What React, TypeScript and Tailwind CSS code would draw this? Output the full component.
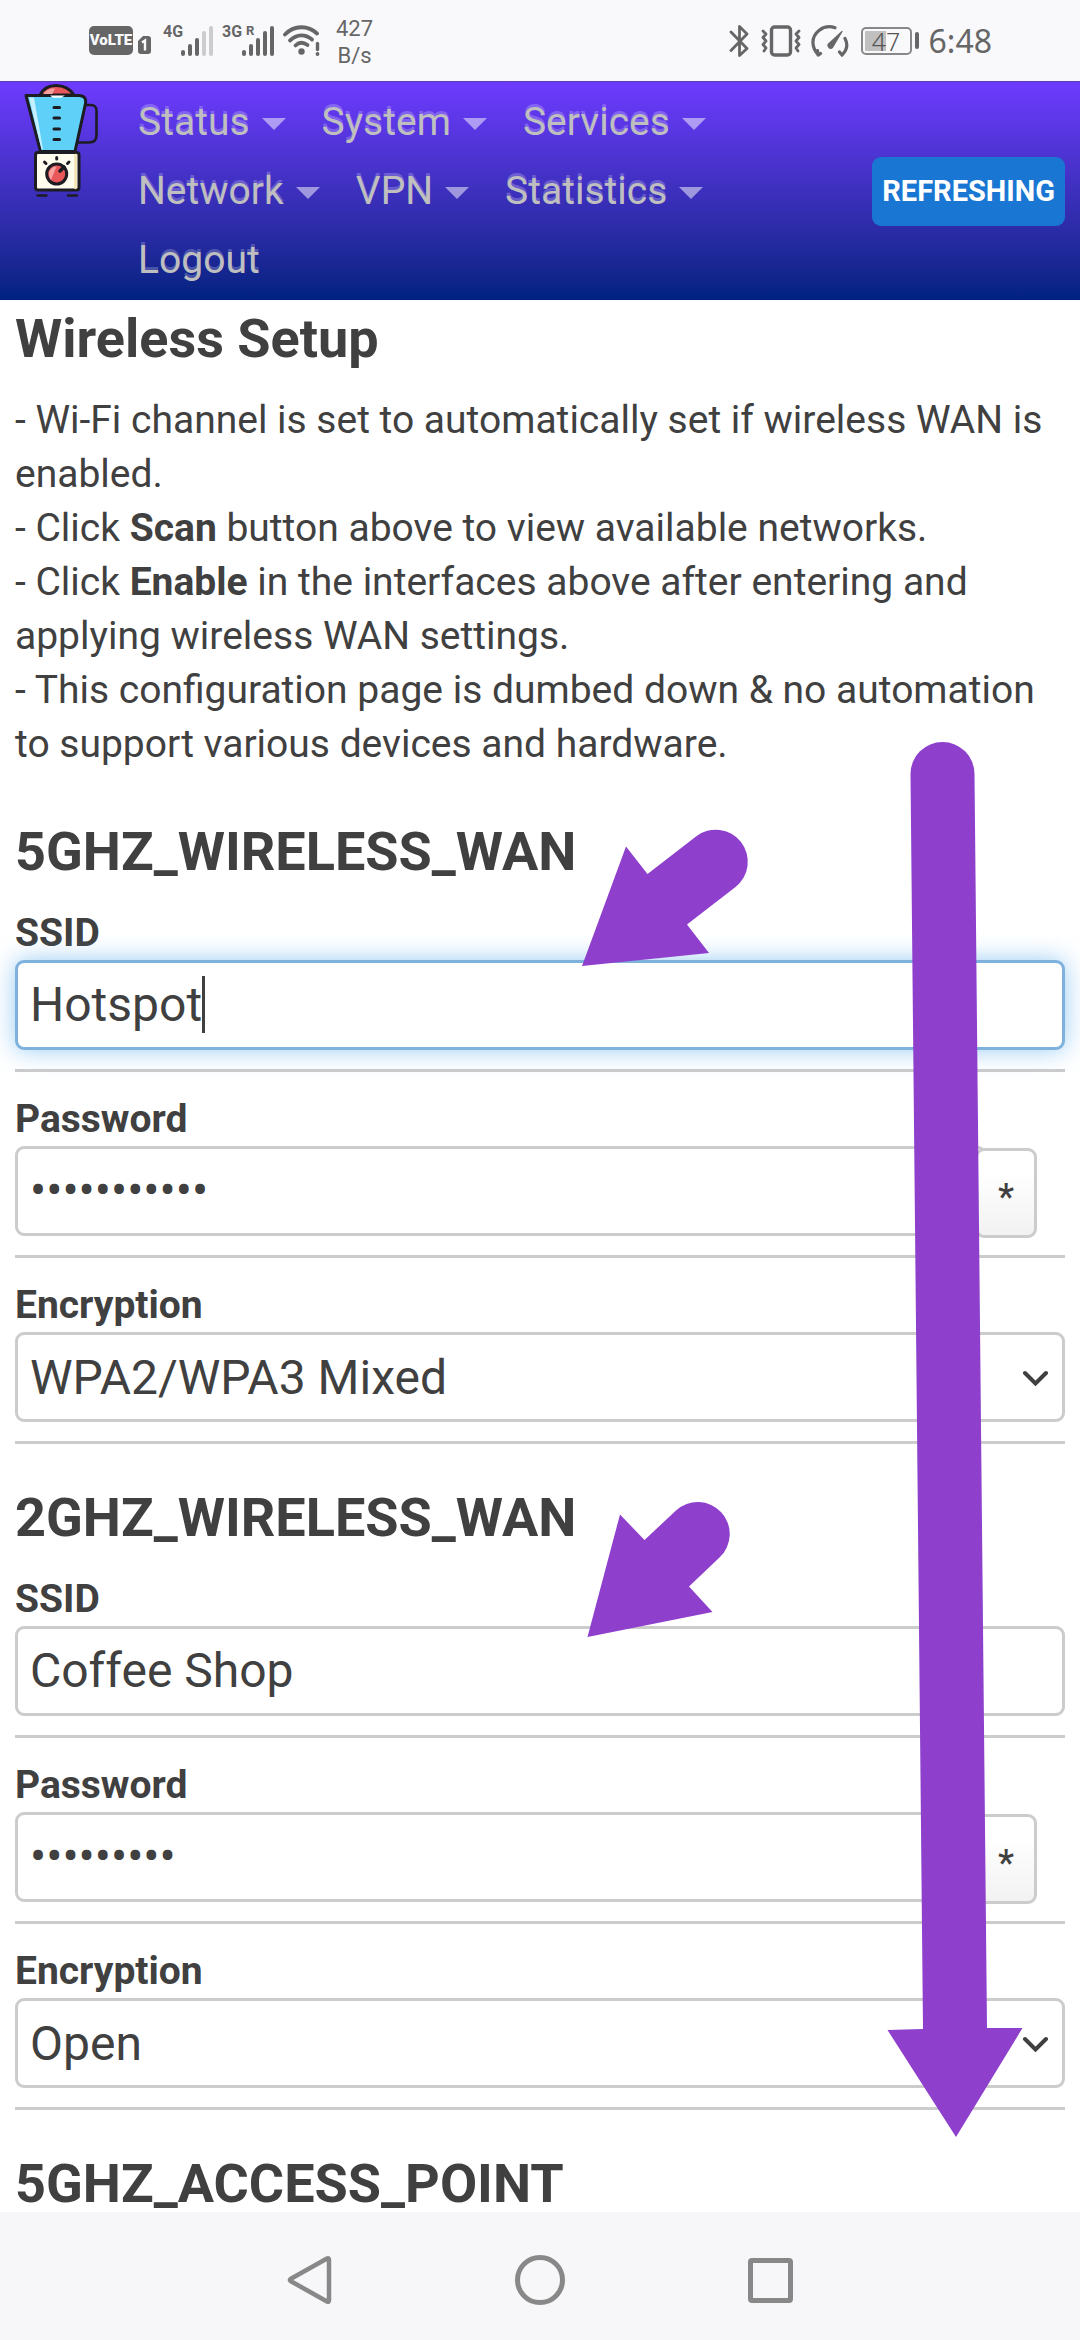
import type { ReactNode } from "react";

const NAV_ITEMS = [
  { label: "Status", menu: true },
  { label: "System", menu: true },
  { label: "Services", menu: true },
  { label: "Network", menu: true },
  { label: "VPN", menu: true },
  { label: "Statistics", menu: true },
  { label: "Logout", menu: false },
];

function SignalBars({ filled }: { filled: number }) {
  const heights = [6, 12, 18, 25, 30];
  return (
    <svg className="h-[30px] w-[34px]" viewBox="0 0 34 30" aria-hidden="true">
      {heights.map((h, i) => (
        <rect key={i} x={i * 7 + 1} y={30 - h} width="4" height={h} rx="2" fill={i < filled ? "#666" : "#ccc"} />
      ))}
    </svg>
  );
}

function StatusBar() {
  return (
    <div className="flex h-[81px] shrink-0 items-center justify-between bg-[#f9f9fc] pr-[88px] pl-[89px] text-[#666]">
      <div className="flex items-center">
        <span className="flex h-[29px] w-[44px] items-center justify-center rounded-[5px] bg-[#666] font-['Roboto',sans-serif] text-[15px] font-black text-[#f9f9fc]">
          VoLTE
        </span>
        <svg className="mt-2 ml-[5px] h-[18px] w-[13px]" viewBox="0 0 13 18" aria-hidden="true">
          <path d="M5 0h5a3 3 0 0 1 3 3v12a3 3 0 0 1-3 3H3a3 3 0 0 1-3-3V5z" fill="#666" />
          <path d="M4 6.500 7 4.500V14.500" fill="none" stroke="#f9f9fc" strokeWidth="2.400" />
        </svg>
        <span className="mb-[18px] ml-3 w-[20px] font-['Roboto',sans-serif] text-[16px] leading-5 font-bold">4G</span>
        <span className="-ml-[3px]">
          <SignalBars filled={3} />
        </span>
        <span className="mb-[18px] ml-2 flex w-[30px] gap-1 font-['Roboto',sans-serif] leading-5 font-bold">
          <span className="text-[16px]">3G</span>
          <span className="text-[13px] leading-[18px]">R</span>
        </span>
        <span className="-ml-[11px]">
          <SignalBars filled={5} />
        </span>
        <svg className="ml-2 h-[31px] w-[37px]" viewBox="0 0 37 31" fill="none" stroke="#666" strokeWidth="3.800" strokeLinecap="round" aria-hidden="true">
          <path d="M2 9.500C11 0 25 0 34 8.500" />
          <path d="M7 15.500C14 9 22 9 29 14.500" />
          <path d="M12.500 20.500C16 17 20.500 17 24.500 20" />
          <circle cx="18.500" cy="26.500" r="3.200" fill="#666" stroke="none" />
          <path d="M34.500 18.500v6" strokeWidth="3.400" />
          <circle cx="34.500" cy="29" r="1.900" fill="#666" stroke="none" />
        </svg>
        <span className="mt-[2px] ml-4 text-center font-['Roboto',sans-serif] text-[22px] leading-[27px]">
          427
          <br />
          B/s
        </span>
      </div>
      <div className="flex items-center">
        <svg className="h-[32px] w-[20px]" viewBox="0 0 20 32" fill="none" stroke="#666" strokeWidth="2.800" strokeLinejoin="round" strokeLinecap="round" aria-hidden="true">
          <path d="M2 7l16 16.500-7.500 7V1.500L18 9 2 25.500" />
        </svg>
        <svg className="ml-3 h-[32px] w-[40px]" viewBox="0 0 40 32" fill="none" stroke="#666" strokeLinejoin="round" strokeLinecap="round" aria-hidden="true">
          <rect x="10.500" y="2" width="19" height="28" rx="3" strokeWidth="3.400" />
          <path d="M2 6l3 3-3 3.500 3 3.500-3 3.500 3 3.500-2 3M38 6l-3 3 3 3.500-3 3.500 3 3.500-3 3.500 2 3" strokeWidth="2.800" />
        </svg>
        <svg className="ml-[10px] h-[32px] w-[38px]" viewBox="0 0 38 32" fill="none" stroke="#666" strokeWidth="3.200" strokeLinecap="round" strokeLinejoin="round" aria-hidden="true">
          <path d="M9.500 28.500 7.500 30C0 22 0 12 8 5.500C13 1.500 19 1 24 2.800M7 30l-.5-4.500" />
          <path d="M34 13.500C37 19 36 25 31 30M31 30l-2.500-3" />
          <path d="M31 6.500 21.500 22.500a2.800 2.800 0 0 1-4.500-3z" fill="#666" strokeWidth="1.200" />
        </svg>
        <span className="ml-3 flex h-[28px] w-[51px] items-center rounded-[5px] border-2 border-[#888] bg-[linear-gradient(90deg,#c0c0c0_0_23px,transparent_23px)] bg-clip-content p-[2px]">
          <span className="w-full text-center font-['Noto_Sans',sans-serif] text-[25px] leading-5 font-light text-[#555]">47</span>
        </span>
        <span className="ml-[3px] h-[17px] w-1 rounded-sm bg-[#666]" />
        <span className="ml-[10px] font-['Noto_Sans',sans-serif] text-[32px] leading-none">6:48</span>
      </div>
    </div>
  );
}

function BlenderLogo() {
  return (
    <svg className="h-[113px] w-[75px]" viewBox="0 0 75 113" stroke="#1c1c22" strokeWidth="3" strokeLinejoin="round" strokeLinecap="round" role="img" aria-label="Blender logo">
      <path d="M16 11C19 5 25 1.500 32 1.500S46 5 50 11z" fill="#e8585a" />
      <path d="M19 10.500C22 5.500 27 4 31 4.500L28 10.500z" fill="#f6a0a0" stroke="none" />
      <path d="M62 21h5c3 0 5.500 2 5.500 5.500V51c0 5-3 7.500-7.500 7.500H54" fill="none" strokeWidth="2.600" />
      <path d="M2 11.500h53c5 0 7.500 3 6.500 8L51 67.500H16.500z" fill="#5fd0f7" />
      <path d="M5 13.500h5l9 52h-1.500z" fill="#c4f0ff" stroke="none" />
      <path d="M26 11.500l3 2.200h8l4-2.200z" fill="#fff" stroke="none" />
      <path d="M30 23.500h5.500M30 34h5.500M30 45h5.500M30 55.500h5.500" />
      <rect x="11.500" y="68.500" width="43.500" height="37.500" rx="2.500" fill="#fffdee" />
      <path d="M51.500 71v33" stroke="#f3e3ae" strokeWidth="2.500" />
      <path d="M32.700 73.500v1.500M20.500 78l1.500 1.500M45 78l-1.500 1.500" />
      <circle cx="32.700" cy="90" r="10" fill="#e8585a" />
      <path d="M27 96C22.500 90 26 82.500 32.500 82.500z" fill="#f6a0a0" stroke="none" />
      <path d="M36 87l4-4" strokeWidth="3.500" />
      <path d="M13.500 111.500h9M44 111.500h9" strokeWidth="2.400" />
    </svg>
  );
}

function Header() {
  return (
    <header className="flex shrink-0 items-center border-t border-[#5b3fb0] bg-linear-to-b from-[#6e3bff] to-[#002280] pt-[6px] pr-[15px] pb-[5px] pl-6 font-['Roboto',sans-serif]">
      <a href="#home" className="-mt-1 self-start">
        <BlenderLogo />
      </a>
      <nav className="ml-[39px] max-w-[680px] flex-1">
        <ul className="flex flex-wrap gap-x-9">
          {NAV_ITEMS.map((item) => (
            <li key={item.label}>
              <a
                href={"#" + item.label.toLowerCase()}
                className="flex items-center gap-3 text-[39px] leading-[69px] text-[#bfbfbf] [text-shadow:0_-3px_0_rgba(255,255,255,0.22)]"
              >
                {item.label}
                {item.menu && (
                  <svg className="mt-[3px] h-3 w-6" viewBox="0 0 24 12" aria-hidden="true">
                    <path d="M0 0h24L12 12z" fill="#fff" fillOpacity="0.500" />
                  </svg>
                )}
              </a>
            </li>
          ))}
        </ul>
      </nav>
      <button type="button" className="ml-auto h-[69px] rounded-[9px] bg-[#1976d2] px-[10px] text-[29px] font-bold text-white">
        REFRESHING
      </button>
    </header>
  );
}

const CONTROL =
  "h-[90px] w-full rounded-[9px] border-3 bg-white px-3 text-[48px] text-[#404040] outline-none";

function Field({ id, label, children }: { id: string; label: string; children: ReactNode }) {
  return (
    <div className="mb-5 border-b-3 border-[#ccc] pb-[19px]">
      <label htmlFor={id} className="block font-bold">
        {label}
      </label>
      {children}
    </div>
  );
}

type SectionProps = {
  id: string;
  title: string;
  ssid: string;
  password: string;
  encryption: string;
  active?: boolean;
};

function NetworkSection({ id, title, ssid, password, encryption, active }: SectionProps) {
  return (
    <section>
      <SectionTitle>{title}</SectionTitle>
      <Field id={id + "-ssid"} label="SSID">
        <div className="relative">
          <input
            id={id + "-ssid"}
            type="text"
            defaultValue={ssid}
            className={
              CONTROL +
              " pb-[2px]" +
              (active ? " border-[#7eb2dc] shadow-[0_0_24px_rgba(82,168,236,0.6)]" : " border-[#ccc]")
            }
          />
          {active && <span className="absolute top-4 left-[187px] h-[57px] w-[3px] bg-[#404040]" />}
        </div>
      </Field>
      <Field id={id + "-password"} label="Password">
        <div className="flex items-start pr-7">
          <input
            id={id + "-password"}
            type="password"
            defaultValue={password}
            className={CONTROL + " min-w-0 flex-1 border-[#ccc] pb-[2px]"}
          />
          <button
            type="button"
            aria-label="Reveal password"
            className="relative mt-[2px] -mb-[2px] -ml-3 h-[90px] w-[62px] shrink-0 rounded-[9px] border-3 border-[#ccc] bg-linear-to-b from-white from-25% to-[#f2f2f2] pt-2 text-[36px] font-medium"
          >
            *
          </button>
        </div>
      </Field>
      <Field id={id + "-encryption"} label="Encryption">
        <div className="relative">
          <select id={id + "-encryption"} defaultValue={encryption} className={CONTROL + " appearance-none border-[#ccc] pt-[2px]"}>
            <option>WPA2/WPA3 Mixed</option>
            <option>Open</option>
          </select>
          <svg className="pointer-events-none absolute top-[38px] right-4 h-4 w-[27px]" viewBox="0 0 27 16" fill="none" stroke="#404040" strokeWidth="4" strokeLinecap="round" aria-hidden="true">
            <path d="M3 3l10.500 10.500L24 3" />
          </svg>
        </div>
      </Field>
    </section>
  );
}

function SectionTitle({ children }: { children: ReactNode }) {
  return <h3 className="text-[54px] leading-[108px] font-bold">{children}</h3>;
}

/* Arrows laid over the form */
function Annotations() {
  return (
    <svg className="pointer-events-none absolute top-0 left-0 h-[1912px] w-[1080px]" viewBox="0 300 1080 1912" fill="#8e3fcc" aria-hidden="true">
      <path d="M582 966 626 846.500 647.500 874 696 836.500A32 32 0 0 1 735.500 887L687 924.500 709 953z" />
      <path d="M587.500 1637 620 1514.500 644.500 1540 676 1510.500A32 32 0 0 1 719.500 1557.500L689 1586.500 712.500 1612z" />
      <path d="M910.500 774A32 32 0 0 1 974.500 774L987 2028 1022.500 2028 956 2137 887.500 2030 923 2029z" />
    </svg>
  );
}

function SystemNav() {
  return (
    <nav className="flex h-[128px] shrink-0 items-center justify-center bg-[#f7f7fa] pt-2">
      <button type="button" aria-label="Back" className="flex w-[230px] justify-center">
        <svg className="h-[52px] w-[46px]" viewBox="0 0 46 52" fill="none" stroke="#888" strokeWidth="4.500" strokeLinejoin="round">
          <path d="M40 4.500Q42 3.500 42 6V46Q42 48.500 40 47.500L3.500 27Q2.500 26 3.500 25z" />
        </svg>
      </button>
      <button type="button" aria-label="Home" className="flex w-[230px] justify-center">
        <span className="h-[50px] w-[50px] rounded-full border-[5px] border-[#888]" />
      </button>
      <button type="button" aria-label="Recent apps" className="flex w-[230px] justify-center">
        <span className="h-[45px] w-[45px] rounded-[4px] border-[5px] border-[#888]" />
      </button>
    </nav>
  );
}

export default function App() {
  return (
    <div className="flex h-screen flex-col bg-white">
      <StatusBar />
      <Header />
      <main className="relative min-h-0 flex-1 overflow-x-hidden overflow-y-auto px-[15px] pt-[3px] font-['Roboto',sans-serif] text-[39px] leading-[54px] text-[#404040] [scrollbar-width:none]">
        <h2 className="mb-[18px] text-[54px] leading-[72px] font-bold">Wireless Setup</h2>
        <p className="mb-[27px]">
          - Wi-Fi channel is set to automatically set if wireless WAN is enabled.
          <br />- Click <strong>Scan</strong> button above to view available networks.
          <br />- Click <strong>Enable</strong> in the interfaces above after entering and applying wireless WAN
          settings.
          <br />- This configuration page is dumbed down &amp; no automation to support various devices and hardware.
        </p>
        <NetworkSection
          id="wan5"
          title="5GHZ_WIRELESS_WAN"
          ssid="Hotspot"
          password="hotspot1234"
          encryption="WPA2/WPA3 Mixed"
          active
        />
        <NetworkSection
          id="wan2"
          title="2GHZ_WIRELESS_WAN"
          ssid="Coffee Shop"
          password="coffee123"
          encryption="Open"
        />
        <SectionTitle>5GHZ_ACCESS_POINT</SectionTitle>
        <Annotations />
      </main>
      <SystemNav />
    </div>
  );
}
